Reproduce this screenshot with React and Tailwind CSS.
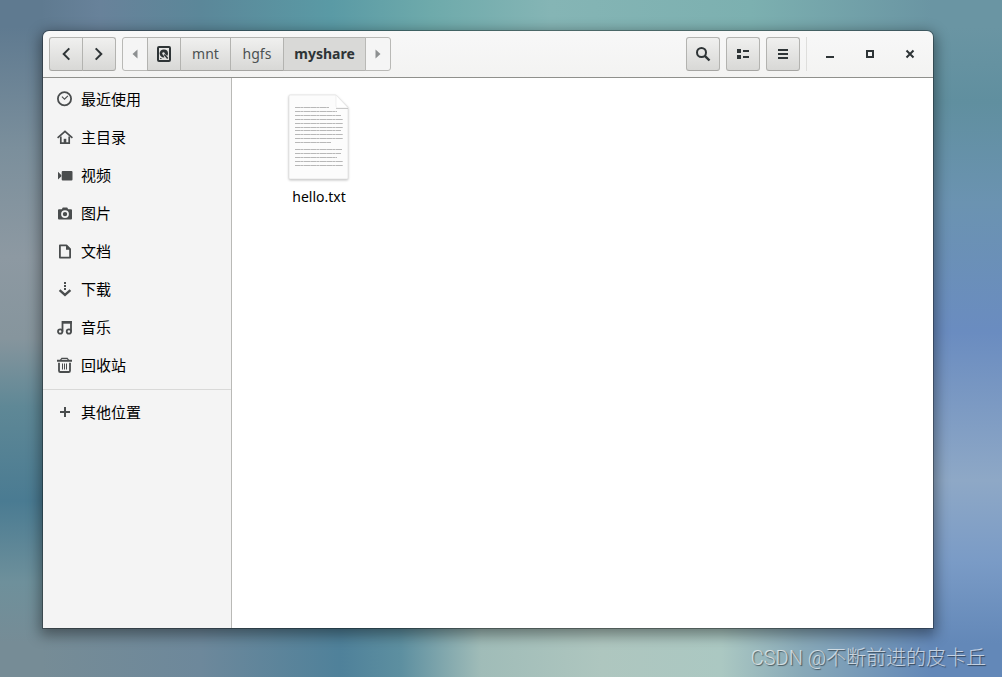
const UI = "font-['Noto_Sans','Noto_Sans_CJK_SC',sans-serif]";

function Icon({ children, className = "", size = 16 }) {
  return (
    <svg
      width={size}
      height={size}
      viewBox="0 0 16 16"
      className={`shrink-0 ${className}`}
      fill="currentColor"
      aria-hidden="true"
    >
      {children}
    </svg>
  );
}

const strokeProps = { fill: "none", stroke: "currentColor", strokeWidth: 2 };

const places = [
  {
    label: "最近使用",
    icon: (
      <>
        <circle cx="7.5" cy="7.800" r="6.6" {...strokeProps} strokeWidth="1.8" />
        <path d="M4.900 5.700 7.500 8.200l3.400-3.400" {...strokeProps} strokeWidth="1.1" />
      </>
    ),
  },
  {
    label: "主目录",
    icon: (
      <>
        <path d="M.6 8.800 8 2.300l7.400 6.500" {...strokeProps} strokeWidth="1.700" />
        <path d="M3.800 7.500v6.700h8.400V7.500" {...strokeProps} strokeWidth="1.700" />
        <path d="M6.700 9.800h2.600v4.500H6.700z" />
      </>
    ),
  },
  {
    label: "视频",
    icon: (
      <path d="M5.700 4h8.800q1 0 1 1v7.500q0 1-1 1H5.700q-1 0-1-1V5q0-1 1-1zM1 4.800 4.200 8v1.500L1 12.500z" />
    ),
  },
  {
    label: "图片",
    icon: (
      <path
        fillRule="evenodd"
        d="M5.800 2.500h4.400l1 1.700H14q1 0 1 1v8.300q0 1-1 1H2q-1 0-1-1V5.200q0-1 1-1h2.800zM8 5.200a3.900 3.900 0 1 0 0 7.800 3.900 3.900 0 0 0 0-7.800zm0 1.700a2.200 2.200 0 1 1 0 4.400 2.200 2.200 0 0 1 0-4.400z"
      />
    ),
  },
  {
    label: "文档",
    icon: (
      <>
        <path d="M2.900 2.400h6.500l3.700 3.700v8.500H2.900z" {...strokeProps} strokeWidth="1.800" strokeLinejoin="round" />
        <path d="M9 2.300v4.500h4.500V5.900L10 2.300z" />
      </>
    ),
  },
  {
    label: "下载",
    icon: (
      <>
        <path d="M7 1h2v2H7zM7 4h2v2H7zM7 7h2v2H7z" />
        <path d="M2.600 9.200 8 14l5.400-4.800" {...strokeProps} strokeWidth="2.400" />
      </>
    ),
  },
  {
    label: "音乐",
    icon: (
      <>
        <circle cx="3.200" cy="12.500" r="2.200" {...strokeProps} strokeWidth="1.800" />
        <circle cx="11.900" cy="12.500" r="2.200" {...strokeProps} strokeWidth="1.800" />
        <path d="M5.500 12.500V3H14v9.500" {...strokeProps} strokeWidth="1.800" />
        <path d="M5 2.100h9.900v2.600H5z" />
      </>
    ),
  },
  {
    label: "回收站",
    icon: (
      <>
        <path d="M0 2.800h3L4.500.8h6L12 2.800h3v1.900H0z" />
        <path d="M4.700 2.500h5.600" stroke="#f4f4f4" strokeWidth="0.800" />
        <path d="M2 5.800v7.900q0 1.300 1.300 1.300h8.400q1.300 0 1.300-1.300V5.800" {...strokeProps} strokeWidth="1.800" />
        <path d="M5.500 6.500v6M7.500 6.500v6M9.500 6.500v6" {...strokeProps} strokeWidth="1" />
      </>
    ),
  },
];

const raised =
  "flex h-[34px] items-center justify-center border border-[#b3b3b0] border-b-[#a5a5a2] bg-linear-to-b from-[#f0f0ef] to-[#d8d8d6] text-[#2e3436]";

function ToolButton({ label, className = "", children }) {
  return (
    <button type="button" aria-label={label} className={`${raised} w-[34px] ${className}`}>
      {children}
    </button>
  );
}

function WindowButton({ label, children }) {
  return (
    <button
      type="button"
      aria-label={label}
      className="flex h-[34px] w-10 items-center justify-center text-[#2e3436]"
    >
      {children}
    </button>
  );
}

function Header() {
  return (
    <header className="flex h-[47px] shrink-0 items-center justify-between rounded-t-md border-b border-[#8f908c] bg-linear-to-b from-[#f8f8f8] to-[#f3f3f2] pr-[3px] pl-1.5">
      <div className="flex gap-1.5">
        <div className="flex">
          <ToolButton label="后退" className="rounded-l-[3px]">
            <Icon>
              <path d="M11.300 2.400 5.700 8l5.600 5.600" {...strokeProps} />
            </Icon>
          </ToolButton>
          <ToolButton label="前进" className="-ml-px rounded-r-[3px]">
            <Icon>
              <path d="M4.700 2.400 10.300 8l-5.600 5.600" {...strokeProps} />
            </Icon>
          </ToolButton>
        </div>
        <nav aria-label="路径" className="flex text-[14px] leading-5">
          <button
            type="button"
            aria-label="向左滚动"
            className="flex h-[34px] w-[26px] items-center justify-center rounded-l-[3px] border border-[#b9b9b6] bg-[#f5f5f5] text-[#8d9091]"
          >
            <Icon>
              <path d="M10.5 3.5v9L5.5 8z" />
            </Icon>
          </button>
          <ToolButton label="根目录" className="-ml-px">
            <Icon>
              <rect x="2" y="1" width="12" height="14" rx="1" {...strokeProps} />
              <path
                fillRule="evenodd"
                d="M8 3.400a4 4 0 0 1 4 4c0 1-.3 1.800-.9 2.500L8.800 7.600a1.300 1.300 0 1 0-1.700 1.200l1.300 2.500A4 4 0 1 1 8 3.400z"
              />
              <path d="m8.300 8.600 3.400 4" stroke="currentColor" strokeWidth="1.500" />
              <path d="M4.200 12.500h1.300" stroke="currentColor" />
            </Icon>
          </ToolButton>
          <button type="button" className={`${raised} -ml-px w-[51px] text-[#4c5152]`}>
            mnt
          </button>
          <button type="button" className={`${raised} -ml-px w-[54px] text-[#4c5152]`}>
            hgfs
          </button>
          <button
            type="button"
            aria-current="page"
            className="-ml-px flex h-[34px] w-[83px] items-center justify-center border border-[#b3b3b0] bg-[#d9d9d7] font-bold text-[#2e3436]"
          >
            myshare
          </button>
          <button
            type="button"
            aria-label="向右滚动"
            className="-ml-px flex h-[34px] w-[26px] items-center justify-center rounded-r-[3px] border border-[#b9b9b6] bg-[#f5f5f5] text-[#8d9091]"
          >
            <Icon>
              <path d="M5.5 3.500v9l5-4.500z" />
            </Icon>
          </button>
        </nav>
      </div>

      <div className="flex items-center">
        <div className="flex gap-1.5 border-r border-[#dededc] pr-1.5">
          <ToolButton label="搜索" className="rounded-[3px]">
            <Icon>
              <circle cx="6.500" cy="6.500" r="4.500" {...strokeProps} />
              <path d="m9.800 9.800 4.700 4.700" {...strokeProps} strokeWidth="2.400" />
            </Icon>
          </ToolButton>
          <ToolButton label="列表视图" className="rounded-[3px]">
            <Icon>
              <path d="M2 3h4v4H2zM2 9h4v4H2zM8 4h6v2H8zM8 10h6v2H8z" />
            </Icon>
          </ToolButton>
          <ToolButton label="菜单" className="rounded-[3px]">
            <Icon>
              <path d="M3 3h10v2H3zM3 7h10v2H3zM3 11h10v2H3z" />
            </Icon>
          </ToolButton>
        </div>
        <div className="flex pl-[3px]">
          <WindowButton label="最小化">
            <Icon>
              <path d="M4 10h8v2H4z" />
            </Icon>
          </WindowButton>
          <WindowButton label="最大化">
            <Icon>
              <path d="M5 5h6v6H5z" {...strokeProps} />
            </Icon>
          </WindowButton>
          <WindowButton label="关闭">
            <Icon>
              <path d="m4.500 4.500 7 7m0-7-7 7" {...strokeProps} />
            </Icon>
          </WindowButton>
        </div>
      </div>
    </header>
  );
}

function PlaceLink({ label, children }) {
  return (
    <a
      href="#"
      className="flex h-[38px] items-center gap-2 pl-3.5 text-[15px] leading-5 text-black"
    >
      <Icon className="text-[#4a4d4e]">{children}</Icon>
      {label}
    </a>
  );
}

function Sidebar() {
  return (
    <nav
      aria-label="位置"
      className="w-[189px] shrink-0 border-r border-[#b9b9b6] bg-[#f4f4f4] pt-0.5"
    >
      <ul>
        {places.map((place) => (
          <li key={place.label}>
            <PlaceLink label={place.label}>{place.icon}</PlaceLink>
          </li>
        ))}
      </ul>
      <div className="mt-[5px] border-t border-[#d9d9d8] pt-[3px]">
        <PlaceLink label="其他位置">
          <path d="M7 3h2v4h4v2H9v4H7V9H3V7h4z" />
        </PlaceLink>
      </div>
    </nav>
  );
}

const textLines = [
  [13, 34], [17, 42], [21, 46], [25, 48], [29, 48], [33, 48], [36, 46], [40, 48], [44, 48], [48, 36],
  [55, 47], [59, 46], [63, 42], [67, 48], [71, 48],
];

function TextFile() {
  return (
    <button type="button" className="flex w-[120px] flex-col items-center gap-[5px]">
      <svg
        width="64"
        height="88"
        viewBox="0 0 64 88"
        aria-hidden="true"
        className="drop-shadow-[0_1px_1px_rgba(0,0,0,0.25)]"
      >
        <path d="M3 1h46l12 12v71q0 1-1 1H3q-1 0-1-1V2q0-1 1-1z" fill="#fcfcfc" stroke="#dcdcdc" strokeWidth="0.6" />
        <path d="M49 1v11q0 2 2 2h10z" fill="#fff" stroke="#e6e6e6" strokeWidth="0.6" />
        <path d="M49 14.500h12" stroke="#bdbdbd" strokeWidth="0.800" />
        {textLines.map(([y, w]) => (
          <path
            key={y}
            d={`M8 ${y + 0.5}h${w}`}
            stroke="#b8b8b8"
            strokeWidth="1.200"
            strokeDasharray="5 0.300 3 0.400 7 0.300"
          />
        ))}
      </svg>
      <span className="text-[14px] leading-5 text-black">hello.txt</span>
    </button>
  );
}

const WALLPAPER =
  "[background:linear-gradient(180deg,#5f7a90_4%,#7b8f9c_22%,#8d99a2_38%,#86959d_50%,#5f8896_60%,#4a7b92_74%,#6e909b_86%,#768c96_95%)_left_top/43px_100%_no-repeat,linear-gradient(180deg,#6a95a3_4%,#608f9f_15%,#6b93b1_30%,#6a8cc0_49%,#8ea8c6_71%,#7a9bc6_83%,#6388b8_95%)_right_top/69px_100%_no-repeat,linear-gradient(90deg,#5f7a90_4%,#68829a_10%,#5b8799_20%,#5a9aa5_33%,#6eaaab_43%,#85b5b5_55%,#7cb0b0_75%,#6a95a3_93%)_left_top/100%_50%_no-repeat,linear-gradient(90deg,#768c96_4%,#6d889b_20%,#4f819a_34%,#5d8fa0_40%,#a0bcb8_48%,#aec6bf_60%,#abc8c2_72%,#88a9b8_80%,#6388b8_93%)]";

export default function App() {
  return (
    <div
      className={`${UI} ${WALLPAPER} relative flex min-h-screen flex-col pt-[31px] pr-[69px] pb-[49px] pl-[43px]`}
    >
      <main className="flex flex-1 flex-col rounded-t-md shadow-[0_0_0_1px_rgba(0,0,0,0.3),0_4px_14px_3px_rgba(0,0,0,0.4)]">
        <Header />
        <div className="flex flex-1">
          <Sidebar />
          <section aria-label="文件" className="flex-1 bg-white pt-4 pl-[27px]">
            <TextFile />
          </section>
        </div>
      </main>
      <p className="absolute right-4 bottom-[5px] font-['Roboto','Noto_Sans_CJK_SC',sans-serif] text-[20px] leading-7 font-light text-white/65 [text-shadow:1px_1px_1px_rgba(0,0,0,0.5)]">
        CSDN @不断前进的皮卡丘
      </p>
    </div>
  );
}
